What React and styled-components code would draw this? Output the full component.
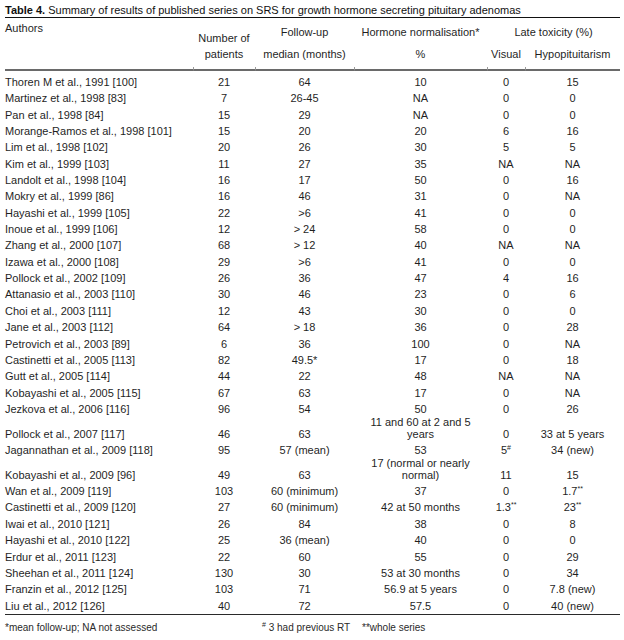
import styled, { createGlobalStyle } from "styled-components";

/* Page reset */
const GlobalStyle = createGlobalStyle`
    body {
        margin: 0;
        background: #ffffff;
        font-family: "Liberation Sans", Arial, sans-serif;
        color: #1f1f1f;
    }
`;

const COLUMNS = "188px 62px 99px 133px 38px 95px";

const rows = [
    ["Thoren M et al., 1991 [100]", "21", "64", "10", "0", "15"],
    ["Martinez et al., 1998 [83]", "7", "26-45", "NA", "0", "0"],
    ["Pan et al., 1998 [84]", "15", "29", "NA", "0", "0"],
    ["Morange-Ramos et al., 1998 [101]", "15", "20", "20", "6", "16"],
    ["Lim et al., 1998 [102]", "20", "26", "30", "5", "5"],
    ["Kim et al., 1999 [103]", "11", "27", "35", "NA", "NA"],
    ["Landolt et al., 1998 [104]", "16", "17", "50", "0", "16"],
    ["Mokry et al., 1999 [86]", "16", "46", "31", "0", "NA"],
    ["Hayashi et al., 1999 [105]", "22", ">6", "41", "0", "0"],
    ["Inoue et al., 1999 [106]", "12", "> 24", "58", "0", "0"],
    ["Zhang et al., 2000 [107]", "68", "> 12", "40", "NA", "NA"],
    ["Izawa et al., 2000 [108]", "29", ">6", "41", "0", "0"],
    ["Pollock et al., 2002 [109]", "26", "36", "47", "4", "16"],
    ["Attanasio et al., 2003 [110]", "30", "46", "23", "0", "6"],
    ["Choi et al., 2003 [111]", "12", "43", "30", "0", "0"],
    ["Jane et al., 2003 [112]", "64", "> 18", "36", "0", "28"],
    ["Petrovich et al., 2003 [89]", "6", "36", "100", "0", "NA"],
    ["Castinetti et al., 2005 [113]", "82", "49.5*", "17", "0", "18"],
    ["Gutt et al., 2005 [114]", "44", "22", "48", "NA", "NA"],
    ["Kobayashi et al., 2005 [115]", "67", "63", "17", "0", "NA"],
    ["Jezkova et al., 2006 [116]", "96", "54", "50", "0", "26"],
    ["Pollock et al., 2007 [117]", "46", "63", ["11 and 60 at 2 and 5", "years"], "0", "33 at 5 years"],
    ["Jagannathan et al., 2009 [118]", "95", "57 (mean)", "53", "5#", "34 (new)"],
    ["Kobayashi et al., 2009 [96]", "49", "63", ["17 (normal or nearly", "normal)"], "11", "15"],
    ["Wan et al., 2009 [119]", "103", "60 (minimum)", "37", "0", "1.7**"],
    ["Castinetti et al., 2009 [120]", "27", "60 (minimum)", "42 at 50 months", "1.3**", "23**"],
    ["Iwai et al., 2010 [121]", "26", "84", "38", "0", "8"],
    ["Hayashi et al., 2010 [122]", "25", "36 (mean)", "40", "0", "0"],
    ["Erdur et al., 2011 [123]", "22", "60", "55", "0", "29"],
    ["Sheehan et al., 2011 [124]", "130", "30", "53 at 30 months", "0", "34"],
    ["Franzin et al., 2012 [125]", "103", "71", "56.9 at 5 years", "0", "7.8 (new)"],
    ["Liu et al., 2012 [126]", "40", "72", "57.5", "0", "40 (new)"],
];

const Page = styled.div`
    padding: 0 4px 0 5px;
    font-size: 11px;
`;

/* Caption with its thin rule */
const Caption = styled.div`
    padding-top: 3px;
    line-height: 14px;
    border-bottom: 1px solid #111;
    color: #111;

    b {
        font-weight: bold;
    }
`;

const Head = styled.div`
    display: grid;
    grid-template-columns: ${COLUMNS};
    grid-template-rows: 28px 16px;
    padding-bottom: 5px;
    line-height: 16px;
    text-align: center;
`;

const HeadCell = styled.div`
    grid-column: ${(p) => p.$col};
    grid-row: ${(p) => p.$row};
    align-self: ${(p) => p.$align || "center"};
    text-align: ${(p) => (p.$left ? "left" : "center")};
    padding-top: ${(p) => (p.$left ? "2px" : "0")};
    white-space: nowrap;
`;

/* Heavy rule under the header, with small ticks at column edges */
const Rule = styled.div`
    display: grid;
    grid-template-columns: ${COLUMNS};
    margin-bottom: 3px;
`;

const RuleCell = styled.div`
    height: 2px;
    border-bottom: 2px solid #6a6a6a;
    border-left: ${(p) => (p.$tick ? "1px solid #9a9a9a" : "none")};
`;

const Body = styled.div`
    border-bottom: 1px solid #2a2a2a;
`;

const Row = styled.div`
    display: grid;
    grid-template-columns: ${COLUMNS};
    align-items: end;
    line-height: 16.35px;
`;

const Cell = styled.div`
    text-align: ${(p) => (p.$left ? "left" : "center")};
    white-space: nowrap;
`;

const Wrapped = styled.div`
    text-align: center;
    line-height: 11.8px;
    padding-bottom: 1.2px;
    white-space: nowrap;
`;

const Mark = styled.sup`
    font-size: 7px;
    line-height: 0;
    vertical-align: 4px;
`;

const Notes = styled.div`
    display: grid;
    grid-template-columns: 257px 100px auto;
    margin-top: 6px;
    font-size: 10px;
    line-height: 14px;
    color: #2a2a2a;
`;

function Value({ text }) {
    const m = text.match(/^(.*?)(\*\*|#)$/);
    if (m) {
        return (
            <>
                {m[1]}
                <Mark>{m[2]}</Mark>
            </>
        );
    }
    return text;
}

export default function App() {
    return (
        <Page>
            <GlobalStyle />
            <Caption>
                <b>Table 4.</b> Summary of results of published series on SRS for growth hormone secreting pituitary adenomas
            </Caption>

            <Head>
                <HeadCell $col="1" $row="1 / 3" $align="start" $left>Authors</HeadCell>
                <HeadCell $col="2" $row="1 / 3" $align="end">Number of<br />patients</HeadCell>
                <HeadCell $col="3" $row="1">Follow-up</HeadCell>
                <HeadCell $col="4" $row="1">Hormone normalisation*</HeadCell>
                <HeadCell $col="5 / 7" $row="1">Late toxicity (%)</HeadCell>
                <HeadCell $col="3" $row="2">median (months)</HeadCell>
                <HeadCell $col="4" $row="2">%</HeadCell>
                <HeadCell $col="5" $row="2">Visual</HeadCell>
                <HeadCell $col="6" $row="2">Hypopituitarism</HeadCell>
            </Head>

            <Rule>
                {[0, 1, 2, 3, 4, 5].map((i) => (
                    <RuleCell key={i} $tick={i > 0} />
                ))}
            </Rule>

            <Body>
                {rows.map((row) => (
                    <Row key={row[0]}>
                        {row.map((v, i) =>
                            Array.isArray(v) ? (
                                <Wrapped key={i}>
                                    {v[0]}
                                    <br />
                                    {v[1]}
                                </Wrapped>
                            ) : (
                                <Cell key={i} $left={i === 0}>
                                    <Value text={v} />
                                </Cell>
                            )
                        )}
                    </Row>
                ))}
            </Body>

            <Notes>
                <span>*mean follow-up; NA not assessed</span>
                <span><Mark>#</Mark> 3 had previous RT</span>
                <span>**whole series</span>
            </Notes>
        </Page>
    );
}
